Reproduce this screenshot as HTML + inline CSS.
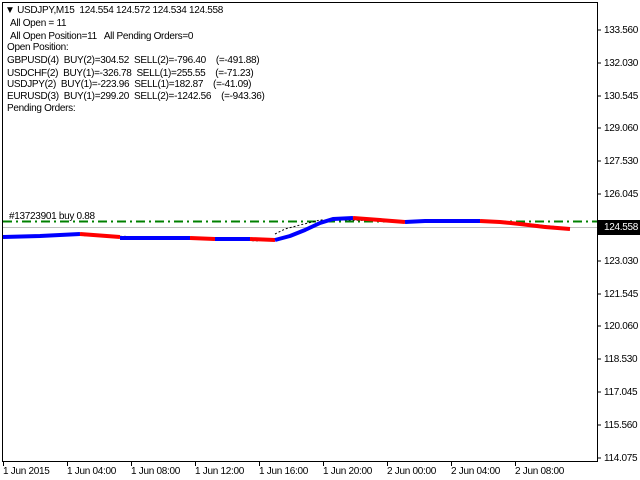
<!DOCTYPE html>
<html><head><style>
body{margin:0;width:640px;height:480px;background:#fff;overflow:hidden;position:relative;font-family:"Liberation Sans",sans-serif;font-size:10px;letter-spacing:-0.3px;color:#000}
.t{position:absolute;white-space:pre;line-height:11px}
</style></head><body>
<svg width="640" height="480" style="position:absolute;left:0;top:0">
<rect x="2.5" y="2.5" width="595" height="459" fill="none" stroke="#000"/>
<g stroke="#000">
<line x1="597" y1="30" x2="601" y2="30"/><line x1="597" y1="63" x2="601" y2="63"/><line x1="597" y1="96" x2="601" y2="96"/><line x1="597" y1="128" x2="601" y2="128"/><line x1="597" y1="161" x2="601" y2="161"/><line x1="597" y1="194" x2="601" y2="194"/><line x1="597" y1="261" x2="601" y2="261"/><line x1="597" y1="294" x2="601" y2="294"/><line x1="597" y1="326" x2="601" y2="326"/><line x1="597" y1="359" x2="601" y2="359"/><line x1="597" y1="392" x2="601" y2="392"/><line x1="597" y1="425" x2="601" y2="425"/><line x1="597" y1="458" x2="601" y2="458"/>
<line x1="3.5" y1="462" x2="3.5" y2="466"/><line x1="67.5" y1="462" x2="67.5" y2="466"/><line x1="131.5" y1="462" x2="131.5" y2="466"/><line x1="195.5" y1="462" x2="195.5" y2="466"/><line x1="259.5" y1="462" x2="259.5" y2="466"/><line x1="323.5" y1="462" x2="323.5" y2="466"/><line x1="387.5" y1="462" x2="387.5" y2="466"/><line x1="451.5" y1="462" x2="451.5" y2="466"/><line x1="515.5" y1="462" x2="515.5" y2="466"/>
</g>
<line x1="3" y1="227.5" x2="597" y2="227.5" stroke="#c0c0c0"/>
<line x1="3" y1="221.5" x2="597" y2="221.5" stroke="#008000" stroke-width="2" stroke-dasharray="9,4,2,4"/>
<g stroke="#000" stroke-width="1" stroke-dasharray="2,2">
<polyline fill="none" points="60,235 100,236 160,237 200,238 240,240 260,241"/>
<polyline fill="none" points="275,234 285,229 300,225 320,220 340,220 400,221 470,220 520,223 560,227"/>
</g>
<g fill="none" stroke-width="4" stroke-linejoin="round">
<polyline stroke="#0000ff" points="3,237 40,236 80,234"/>
<polyline stroke="#ff0000" points="80,234 120,237"/>
<polyline stroke="#0000ff" points="120,238 190,238"/>
<polyline stroke="#ff0000" points="190,238 215,239"/>
<polyline stroke="#0000ff" points="215,239 250,239"/>
<polyline stroke="#ff0000" points="250,239 275,240"/>
<polyline stroke="#0000ff" points="275,240 290,236 305,230 320,223 333,219 353,218"/>
<polyline stroke="#ff0000" points="353,218 380,220 405,222"/>
<polyline stroke="#0000ff" points="405,222 425,221 480,221"/>
<polyline stroke="#ff0000" points="480,221 500,222 520,224 545,227 570,229"/>
</g>
</svg>
<div class="t" style="left:5px;top:5px">▼ USDJPY,M15  124.554 124.572 124.534 124.558</div>
<div class="t" style="left:10px;top:18px">All Open = 11</div>
<div class="t" style="left:10px;top:31px">All Open Position=11   All Pending Orders=0</div>
<div class="t" style="left:7px;top:42px">Open Position:</div>
<div class="t" style="left:7px;top:55px">GBPUSD(4)  BUY(2)=304.52  SELL(2)=-796.40    (=-491.88)</div>
<div class="t" style="left:7px;top:68px">USDCHF(2)  BUY(1)=-326.78  SELL(1)=255.55    (=-71.23)</div>
<div class="t" style="left:7px;top:79px">USDJPY(2)  BUY(1)=-223.96  SELL(1)=182.87    (=-41.09)</div>
<div class="t" style="left:7px;top:91px">EURUSD(3)  BUY(1)=299.20  SELL(2)=-1242.56    (=-943.36)</div>
<div class="t" style="left:7px;top:103px">Pending Orders:</div>
<div class="t" style="left:9px;top:211px">#13723901 buy 0.88</div>
<div class="t" style="left:604px;top:25px">133.560</div>
<div class="t" style="left:604px;top:58px">132.030</div>
<div class="t" style="left:604px;top:91px">130.545</div>
<div class="t" style="left:604px;top:123px">129.060</div>
<div class="t" style="left:604px;top:156px">127.530</div>
<div class="t" style="left:604px;top:189px">126.045</div>
<div class="t" style="left:598px;top:220px;background:#000;color:#fff;padding:2px 4px 2px 6px">124.558</div>
<div class="t" style="left:604px;top:256px">123.030</div>
<div class="t" style="left:604px;top:289px">121.545</div>
<div class="t" style="left:604px;top:321px">120.060</div>
<div class="t" style="left:604px;top:354px">118.530</div>
<div class="t" style="left:604px;top:387px">117.045</div>
<div class="t" style="left:604px;top:420px">115.560</div>
<div class="t" style="left:604px;top:453px">114.075</div>
<div class="t" style="left:3px;top:466px">1 Jun 2015</div>
<div class="t" style="left:67px;top:466px">1 Jun 04:00</div>
<div class="t" style="left:131px;top:466px">1 Jun 08:00</div>
<div class="t" style="left:195px;top:466px">1 Jun 12:00</div>
<div class="t" style="left:259px;top:466px">1 Jun 16:00</div>
<div class="t" style="left:323px;top:466px">1 Jun 20:00</div>
<div class="t" style="left:387px;top:466px">2 Jun 00:00</div>
<div class="t" style="left:451px;top:466px">2 Jun 04:00</div>
<div class="t" style="left:515px;top:466px">2 Jun 08:00</div>
</body></html>
